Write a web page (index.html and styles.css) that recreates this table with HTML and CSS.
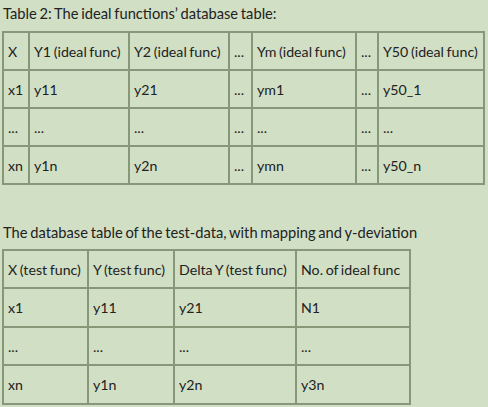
FILE: index.html
```html
<!DOCTYPE html>
<html>
<head>
<meta charset="utf-8">
<link rel="stylesheet" href="styles.css">
</head>
<body>
<div class="page">
  <p class="caption cap1">Table 2: The ideal functions’ database table:</p>
  <table class="grid t1">
    <colgroup>
      <col class="c26"><col class="c100"><col class="c100"><col class="c23"><col class="c104"><col class="c22"><col class="c106">
    </colgroup>
    <tr><td>X</td><td>Y1 (ideal func)</td><td>Y2 (ideal func)</td><td>...</td><td>Ym (ideal func)</td><td>...</td><td>Y50 (ideal func)</td></tr>
    <tr><td>x1</td><td>y11</td><td>y21</td><td>...</td><td>ym1</td><td>...</td><td>y50_1</td></tr>
    <tr><td>...</td><td>...</td><td>...</td><td>...</td><td>...</td><td>...</td><td>...</td></tr>
    <tr><td>xn</td><td>y1n</td><td>y2n</td><td>...</td><td>ymn</td><td>...</td><td>y50_n</td></tr>
  </table>
  <p class="caption cap2">The database table of the test-data, with mapping and y-deviation</p>
  <table class="grid t2">
    <colgroup>
      <col class="d85"><col class="d86"><col class="d122"><col class="d114">
    </colgroup>
    <tr><td>X (test func)</td><td>Y (test func)</td><td>Delta Y (test func)</td><td>No. of ideal func</td></tr>
    <tr class="tall"><td>x1</td><td>y11</td><td>y21</td><td>N1</td></tr>
    <tr><td>...</td><td>...</td><td>...</td><td>...</td></tr>
    <tr class="tall"><td>xn</td><td>y1n</td><td>y2n</td><td>y3n</td></tr>
  </table>
</div>
</body>
</html>
```
FILE: styles.css
```css
html, body {
  margin: 0;
  padding: 0;
  background: #d1dfc4;
}
.page {
  width: 488px;
  height: 407px;
  background: #d1dfc4;
  font-family: Lato, "Liberation Sans", sans-serif;
  font-size: 14.7px;
  color: #222222;
  padding-top: 4px;
  box-sizing: border-box;
  overflow: hidden;
}
.caption {
  margin: 0 0 0 3px;
  line-height: 18px;
  word-spacing: -1px;
}
.cap1 { margin-bottom: 9px; }
.cap2 { margin-top: 38px; margin-bottom: 8px; }
.grid {
  border-collapse: collapse;
  table-layout: fixed;
  margin-left: 2px;
}
.grid td {
  border: 2px solid #879879;
  padding: 0 0 0 4px;
  height: 36px;
  white-space: nowrap;
  overflow: hidden;
  font-size: 14.2px;
  word-spacing: -1px;
}
.t1 { width: 482px; }
.t2 { width: 408px; }
.t2 .tall td { height: 37px; }
.c26 { width: 26px; }
.c100 { width: 100px; }
.c23 { width: 23px; }
.c104 { width: 104px; }
.c22 { width: 22px; }
.c106 { width: 106px; }
.d85 { width: 85px; }
.d86 { width: 86px; }
.d122 { width: 122px; }
.d114 { width: 114px; }
```
